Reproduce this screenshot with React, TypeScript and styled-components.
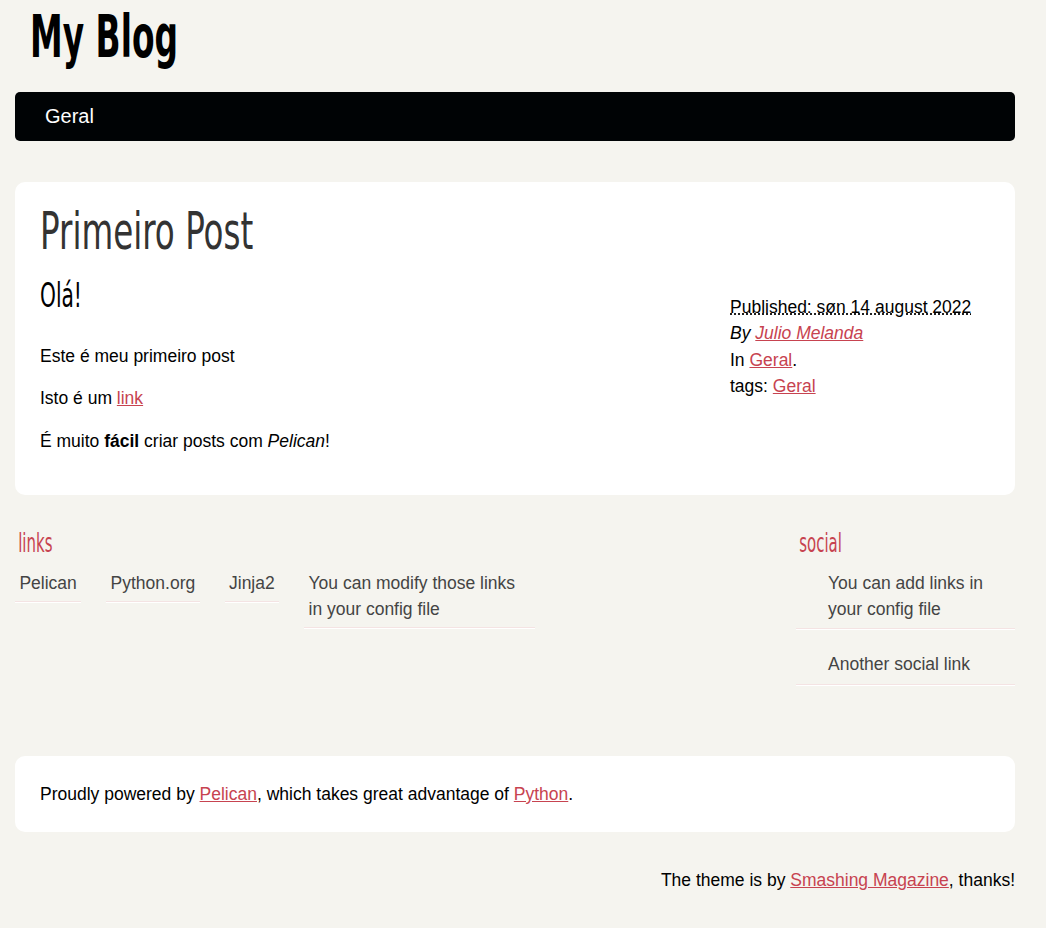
import React from "react";
import styled, { createGlobalStyle } from "styled-components";

const GlobalStyle = createGlobalStyle`
  html, body {
    margin: 0;
    padding: 0;
    background: #f5f4ef;
    color: #000;
    font-family: "Liberation Sans", Arial, sans-serif;
    font-size: 17.5px;
    line-height: 1.5;
  }
`;

// no Yanone Kaffeesatz here: a condensed face squeezed sideways stands in for it
const headingFont = `"DejaVu Sans Condensed", "DejaVu Sans", sans-serif`;

const Page = styled.div`
  width: 1000px;
  margin-left: 15px;
`;

const Banner = styled.header`
  padding-left: 15px;
`;

const SiteTitle = styled.h1`
  margin: 0;
  font-family: ${headingFont};
  font-stretch: condensed;
  font-weight: 700;
  font-size: 58px;
  line-height: 74px;
  color: #000;
  transform: scaleX(0.63);
  transform-origin: left center;
`;

const Nav = styled.nav`
  margin-top: 18px;
  height: 49px;
  display: flex;
  align-items: center;
  background: #000305;
  border-radius: 5px;
`;

const NavLink = styled.a`
  padding: 0 30px;
  color: #fff;
  font-size: 20px;
  line-height: 49px;
  text-decoration: none;
`;

const Box = styled.section<{ $top: number }>`
  margin-top: ${(p) => p.$top}px;
  background: #fff;
  border-radius: 10px;
  padding: 25px;
`;

const PostTitle = styled.h2`
  margin: 0;
  font-family: ${headingFont};
  font-stretch: condensed;
  font-weight: 400;
  font-size: 51px;
  line-height: 50px;
  color: #333;
  transform: scaleX(0.71);
  transform-origin: left center;
`;

const PostRow = styled.div`
  display: flex;
  align-items: flex-start;
`;

const PostBody = styled.div`
  flex: 1;
`;

const SubTitle = styled.h1`
  margin: 20px 0 30px;
  font-family: ${headingFont};
  font-stretch: condensed;
  font-weight: 400;
  font-size: 34px;
  line-height: 36px;
  transform: scaleX(0.66);
  transform-origin: left center;
`;

const Para = styled.p`
  margin: 0 0 16px;
`;

const Link = styled.a`
  color: #c74350;
  text-decoration: underline;
`;

const PostInfo = styled.aside`
  width: 260px;
  padding-top: 37px;
`;

const Published = styled.abbr`
  text-decoration: underline dotted;
`;

const Extras = styled.div`
  margin-top: 33px;
  display: flex;
  justify-content: space-between;
  align-items: flex-start;
`;

const Blogroll = styled.div`
  width: 769px;
`;

const Social = styled.div`
  width: 219px;
`;

const ExtrasTitle = styled.h2`
  margin: 0 0 7px;
  padding: 0 5px;
  font-family: ${headingFont};
  font-stretch: condensed;
  font-weight: 400;
  font-size: 26px;
  line-height: 30px;
  color: #c74350;
  transform: scaleX(0.64);
  transform-origin: left center;
`;

const LinkList = styled.ul<{ $row?: boolean }>`
  list-style: none;
  margin: ${(p) => (p.$row ? "0" : "3px 0 0")};
  padding: 0;
  display: flex;
  flex-direction: ${(p) => (p.$row ? "row" : "column")};
  align-items: flex-start;
  gap: ${(p) => (p.$row ? "25px" : "0")};
`;

const LinkItem = styled.li<{ $row?: boolean }>`
  max-width: ${(p) => (p.$row ? "231px" : "none")};
  align-self: ${(p) => (p.$row ? "auto" : "stretch")};
  border-bottom: 1px solid #fff;
`;

const ExtraLink = styled.a<{ $social?: boolean }>`
  display: block;
  color: #444;
  text-decoration: none;
  border-bottom: 1px solid #f4e3e3;
  padding: ${(p) => (p.$social ? "21px 5px 6px 32px" : "5px 4.4px")};

  li:first-child > & {
    padding-top: 5px;
  }
`;

const Credit = styled.p`
  margin: 35px 0 0;
  text-align: right;
`;

const blogroll = ["Pelican", "Python.org", "Jinja2", "You can modify those links in your config file"];
const social = ["You can add links in your config file", "Another social link"];

export default function App() {
  return (
    <>
      <GlobalStyle />
      <Page>
        <Banner>
          <SiteTitle>My Blog</SiteTitle>
        </Banner>
        <Nav>
          <NavLink href="#">Geral</NavLink>
        </Nav>

        <Box $top={41}>
          <PostTitle>Primeiro Post</PostTitle>
          <PostRow>
            <PostBody>
              <SubTitle>Olá!</SubTitle>
              <Para>Este é meu primeiro post</Para>
              <Para>
                Isto é um <Link href="#">link</Link>
              </Para>
              <Para>
                É muito <strong>fácil</strong> criar posts com <em>Pelican</em>!
              </Para>
            </PostBody>
            <PostInfo>
              <div>
                <Published title="2022-08-14T00:00:00">Published: søn 14 august 2022</Published>
              </div>
              <div>
                <em>
                  By <Link href="#">Julio Melanda</Link>
                </em>
              </div>
              <div>
                In <Link href="#">Geral</Link>.
              </div>
              <div>
                tags: <Link href="#">Geral</Link>
              </div>
            </PostInfo>
          </PostRow>
        </Box>

        <Extras>
          <Blogroll>
            <ExtrasTitle>links</ExtrasTitle>
            <LinkList $row>
              {blogroll.map((l) => (
                <LinkItem $row key={l}>
                  <ExtraLink href="#">{l}</ExtraLink>
                </LinkItem>
              ))}
            </LinkList>
          </Blogroll>
          <Social>
            <ExtrasTitle>social</ExtrasTitle>
            <LinkList>
              {social.map((l) => (
                <LinkItem key={l}>
                  <ExtraLink $social href="#">
                    {l}
                  </ExtraLink>
                </LinkItem>
              ))}
            </LinkList>
          </Social>
        </Extras>

        <Box $top={70}>
          Proudly powered by <Link href="#">Pelican</Link>, which takes great advantage of{" "}
          <Link href="#">Python</Link>.
        </Box>

        <Credit>
          The theme is by <Link href="#">Smashing Magazine</Link>, thanks!
        </Credit>
      </Page>
    </>
  );
}
